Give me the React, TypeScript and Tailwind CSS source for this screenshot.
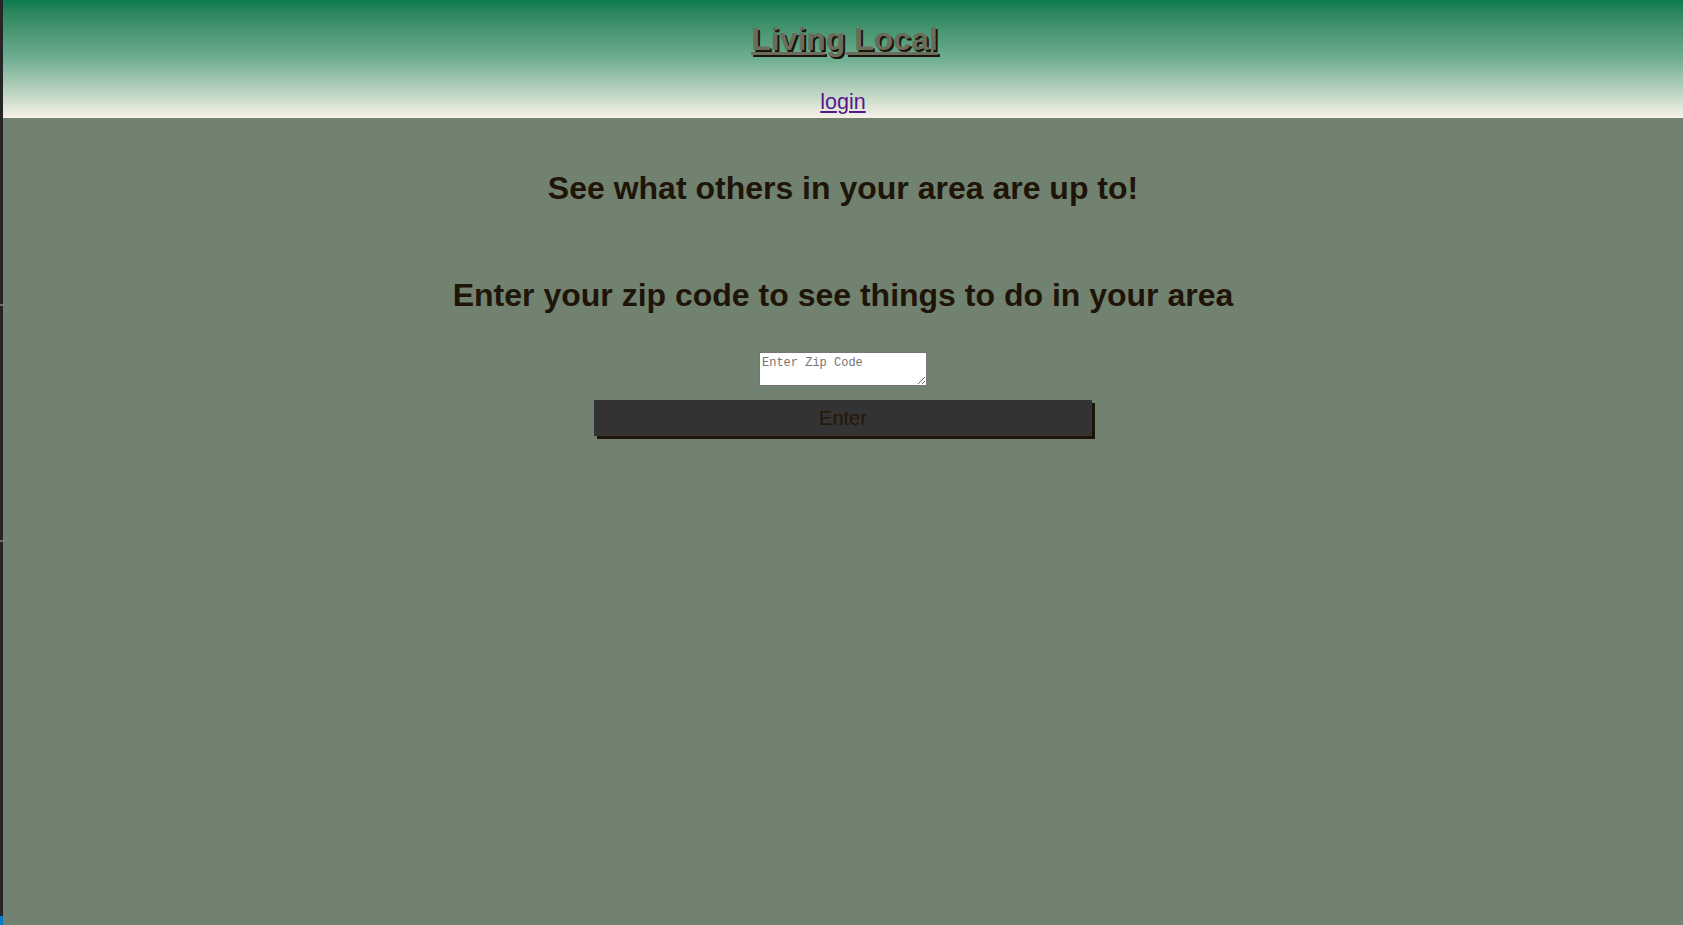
export default function App() {
  return (
    <div
      className="flex min-h-[925px] w-full bg-[#718270]"
      style={{ fontFamily: '"Liberation Sans", Arial, sans-serif' }}
    >
      <div className="relative w-[3px] shrink-0 bg-[#252526]">
        <div className="absolute left-0 top-[304px] h-[2px] w-[3px] bg-[#6e6e6e]" />
        <div className="absolute left-0 top-[540px] h-[2px] w-[3px] bg-[#6e6e6e]" />
        <div className="absolute bottom-0 left-0 h-[9px] w-[3px] bg-[#007acc]" />
      </div>
      <div className="flex min-w-0 flex-1 flex-col">
        <header className="flex h-[118px] flex-col items-center bg-gradient-to-b from-[#087c50] via-[#6fae92] to-[#f7f2e8]">
          <h1 className="ml-[3px] mt-[21px] text-[32px] font-bold leading-[37px] text-[#6a6c5c] underline [text-shadow:2px_2px_0_#1e1408]">
            Living Local
          </h1>
          <a
            href="#"
            className="mt-[32px] text-[21.5px] leading-[24px] text-[#551a8b] underline"
          >
            login
          </a>
        </header>
        <main className="flex flex-col items-center">
          <h2 className="mt-[52px] text-[32px] font-bold leading-[37px] text-[#1e1408]">
            See what others in your area are up to!
          </h2>
          <h2 className="mt-[70px] text-[32px] font-bold leading-[37px] text-[#1e1408]">
            Enter your zip code to see things to do in your area
          </h2>
          <textarea
            placeholder="Enter Zip Code"
            className="mt-[38px] h-[34px] w-[168px] border border-[#767676] bg-white px-[2px] pt-[3px] text-[12px] leading-[14px] text-black placeholder:text-[#757575]"
            style={{ fontFamily: '"Liberation Mono", "Courier New", monospace' }}
          />
          <button className="mt-[14px] h-[36px] w-[498px] bg-[#333333] text-[20px] text-[#241608] shadow-[3px_3px_0_#1e1408]">
            Enter
          </button>
        </main>
      </div>
    </div>
  );
}
